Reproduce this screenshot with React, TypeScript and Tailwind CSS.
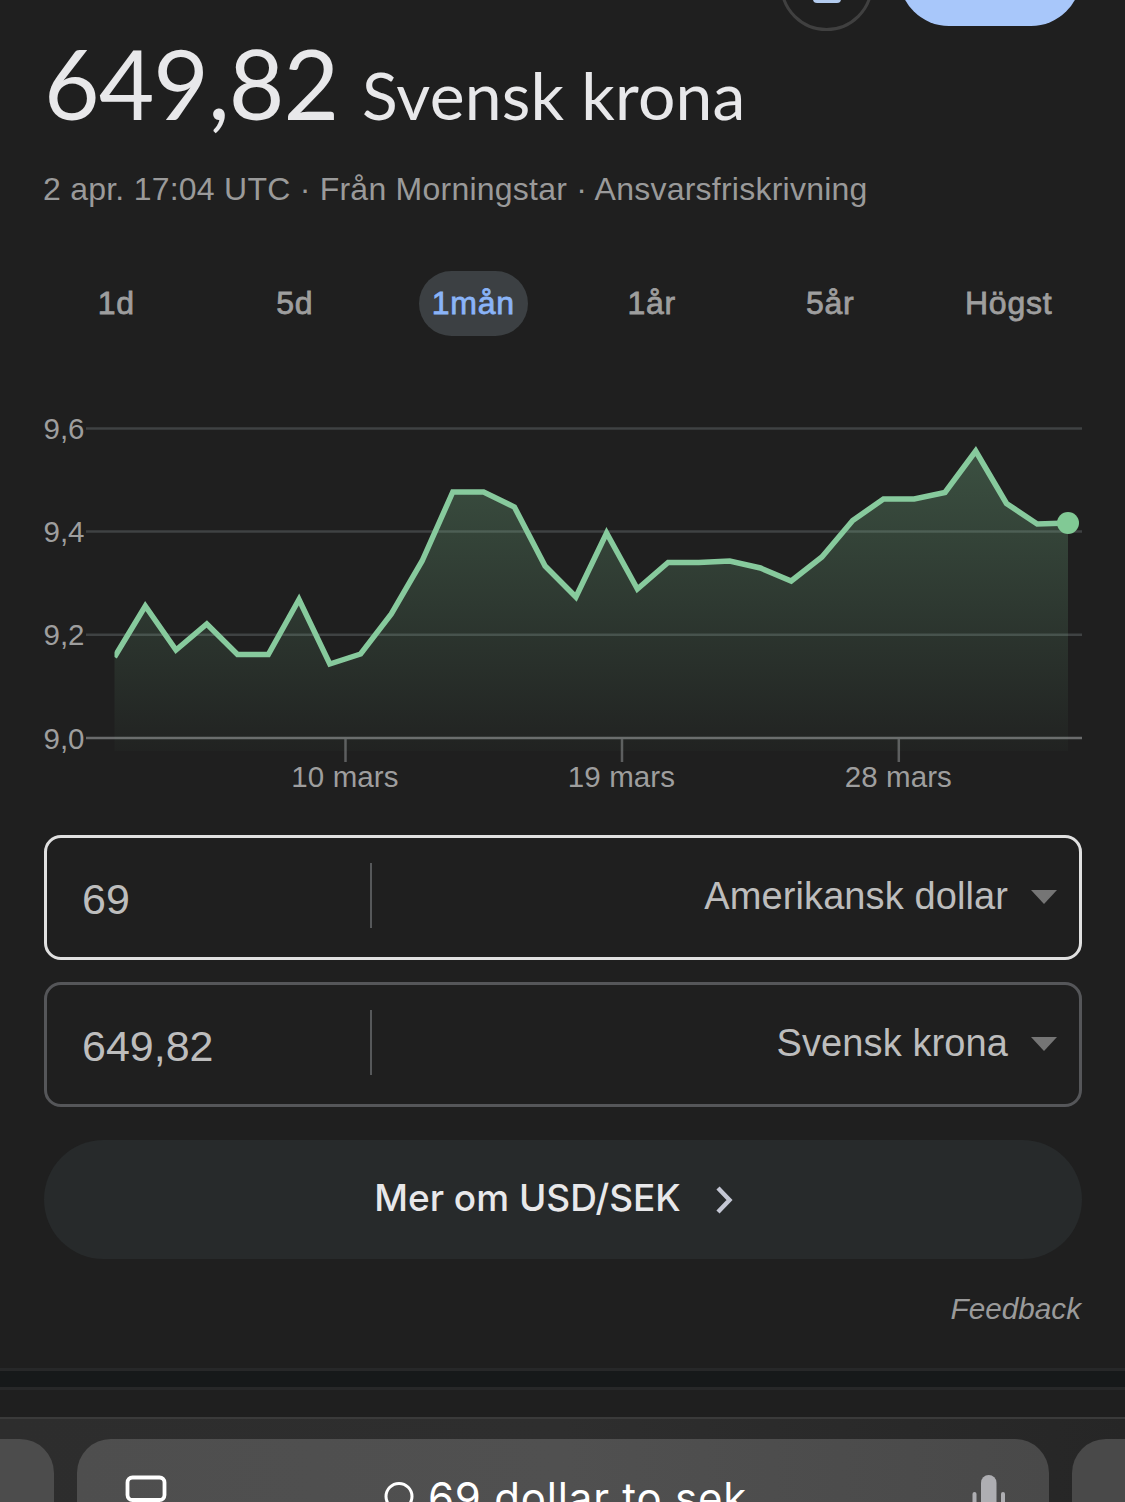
interface Period {
  id: string
  label: string
}

const periods: Period[] = [
  { id: '1d', label: '1d' },
  { id: '5d', label: '5d' },
  { id: '1m', label: '1mån' },
  { id: '1y', label: '1år' },
  { id: '5y', label: '5år' },
  { id: 'max', label: 'Högst' },
]

const activePeriod = '1m'

const yTicks = [
  { label: '9,6', y: 28.5 },
  { label: '9,4', y: 131.5 },
  { label: '9,2', y: 234.8 },
  { label: '9,0', y: 338 },
]

const xTicks = [
  { label: '10 mars', x: 345.5 },
  { label: '19 mars', x: 622 },
  { label: '28 mars', x: 898.8 },
]

// one y value per day, in chart pixels
const rates = [
  257, 206, 250, 224, 254.5, 254.5, 199.5, 264, 254, 214, 161, 92, 92, 107, 166, 197,
  133, 189, 162.5, 162.5, 161, 168, 181, 157, 120.5, 99, 99, 92.5, 51, 103.5, 124, 123,
]

const startX = 114.5
const endX = 1068
const step = (endX - startX) / (rates.length - 1)
const line = rates.map((y, i) => `${(startX + i * step).toFixed(1)},${y}`).join(' ')

function RateChart() {
  return (
    <svg width="1125" height="400" viewBox="0 0 1125 400" className="block shrink-0">
      <defs>
        <linearGradient id="area" gradientUnits="userSpaceOnUse" x1="0" y1="50" x2="0" y2="352">
          <stop offset="0" stopColor="#81c995" stopOpacity="0.29" />
          <stop offset="1" stopColor="#81c995" stopOpacity="0.02" />
        </linearGradient>
        <clipPath id="plot">
          <rect x="114.5" y="0" width="1011" height="400" />
        </clipPath>
      </defs>
      {yTicks.map((t, i) => (
        <g key={t.label}>
          <line x1="86" x2="1082" y1={t.y} y2={t.y} stroke={i === 3 ? '#6a6b6c' : '#3f4243'} strokeWidth="2.5" />
          <text x="43.5" y={t.y + 10.5} fontSize="29.5" fill="#9e9e9e">{t.label}</text>
        </g>
      ))}
      {xTicks.map(t => (
        <g key={t.label}>
          <line x1={t.x} x2={t.x} y1="339" y2="362" stroke="#5d5e5f" strokeWidth="2.5" />
          <text x={t.x - 0.5} y="387" fontSize="29.5" fill="#9e9e9e" textAnchor="middle" letterSpacing="0.1">{t.label}</text>
        </g>
      ))}
      <polygon points={`${startX},351 ${line} ${endX},351`} fill="url(#area)" />
      <polyline points={line} fill="none" stroke="#87ca9d" strokeWidth="5.5" clipPath="url(#plot)" />
      <circle cx="1068" cy="123" r="11" fill="#81c995" />
    </svg>
  )
}

function CurrencyField({ value, currency, focused }: { value: string; currency: string; focused?: boolean }) {
  return (
    <div
      className={`flex h-[125px] items-center rounded-[17px] border-[3px] pr-[21px] pl-[35px] ${
        focused ? 'border-[#e0e0e0]' : 'border-[#555659]'
      }`}
    >
      <span className="w-[288px] pt-[4px] text-[43px] leading-none text-[#bdbdbd]">{value}</span>
      <span className="mb-[4px] h-[65px] w-[2px] bg-[#56585a]" />
      <span className="mb-[3px] ml-auto text-[38px] leading-none tracking-[0.1px] text-[#bdbdbd]">{currency}</span>
      <svg width="28" height="16" viewBox="0 0 28 16" className="mb-[2px] ml-[22px]">
        <path d="M1 1h26L14 15z" fill="#757575" />
      </svg>
    </div>
  )
}

function BrowserBar() {
  return (
    <div className="flex h-[85px] gap-[23px] overflow-hidden border-t-2 border-[#3a3a3a] bg-gradient-to-r from-[#2d2d2d] via-[#2e2e2e] to-[#262626] pt-[20px]">
      <div className="h-[140px] w-[54px] shrink-0 rounded-tr-[34px] bg-[#4c4c4c]" />
      <div className="flex h-[140px] w-[972px] shrink-0 items-start rounded-[34px] bg-gradient-to-r from-[#4e4e4e] via-[#505050] to-[#494949]">
        <svg width="46" height="63" viewBox="0 0 46 63" className="ml-[46px] shrink-0" fill="none">
          <rect x="4.5" y="38.5" width="37" height="22.5" rx="5" stroke="#fff" strokeWidth="3.8" />
        </svg>
        <svg width="34" height="63" viewBox="0 0 34 63" className="ml-[215px] shrink-0" fill="none">
          <circle cx="15" cy="57.5" r="13" stroke="#fff" strokeWidth="3" />
        </svg>
        <span className="mt-[33px] ml-[10px] w-[330px] shrink-0 font-['Inter',sans-serif] text-[42px] leading-[52px] tracking-[0.8px] whitespace-nowrap text-white">
          69 dollar to sek
        </span>
        <svg width="36" height="63" viewBox="0 0 36 63" className="ml-[213px] shrink-0" fill="#aeaeb2">
          <rect x="10" y="36" width="15.5" height="40" rx="7.7" />
          <rect x="1.5" y="53" width="4" height="20" rx="2" />
          <rect x="30" y="53" width="4" height="20" rx="2" />
        </svg>
      </div>
      <div className="h-[140px] w-[54px] shrink-0 rounded-tl-[34px] bg-[#494949]" />
    </div>
  )
}

export default function App() {
  return (
    <div className="flex h-[1502px] w-[1125px] flex-col overflow-hidden bg-[#1f1f1f] font-['Liberation_Sans',sans-serif]">
      {/* Share and follow buttons, scrolled mostly out of view */}
      <div className="flex h-[39px] shrink-0 items-start justify-end gap-[26px] overflow-hidden pr-[44px]">
        <div className="-mt-[62px] flex h-[93px] w-[93px] items-end justify-center rounded-full border-[3px] border-[#404040] pb-[25px]">
          <div className="h-[30px] w-[28px] rounded-[4px] bg-[#b3cbee]" />
        </div>
        <div className="-mt-[74px] h-[100px] w-[182px] rounded-[50px] bg-[#a8c7fa]" />
      </div>

      <h1 className="flex h-[87px] shrink-0 items-baseline pl-[44px] font-['Lato',sans-serif] leading-[87px] whitespace-nowrap text-[#e8e8ea]">
        <span className="w-[318px] text-[96px] tracking-[-1px]">649,82</span>
        <span className="text-[66px] tracking-[0.2px]">Svensk krona</span>
      </h1>

      <p className="mt-[43px] shrink-0 pl-[43px] text-[32px] leading-[40px] tracking-[0.24px] whitespace-nowrap text-[#9a9a9a]">
        2 apr. 17:04 UTC · Från Morningstar · Ansvarsfriskrivning
      </p>

      <nav className="mt-[62px] grid shrink-0 grid-cols-6 px-[27px]">
        {periods.map(p => (
          <div key={p.id} className="flex justify-center">
            <button
              className={`h-[65px] rounded-full px-[13px] pb-[2px] text-[32px] tracking-[0.8px] [-webkit-text-stroke-width:0.8px] ${
                p.id === activePeriod ? 'bg-[#3c4043] text-[#8ab4f8]' : 'text-[#9e9e9e]'
              }`}
            >
              {p.label}
            </button>
          </div>
        ))}
      </nav>

      <div className="mt-[64px] h-[435px] shrink-0">
        <RateChart />
      </div>

      <div className="flex shrink-0 flex-col gap-[22px] pr-[43px] pl-[44px]">
        <CurrencyField value="69" currency="Amerikansk dollar" focused />
        <CurrencyField value="649,82" currency="Svensk krona" />
      </div>

      <button className="mr-[43px] ml-[44px] mt-[33px] flex h-[119px] shrink-0 items-center justify-center rounded-full bg-[#272a2b] pr-[17px] pb-[4px] font-['Inter',sans-serif] text-[37px] font-medium text-[#e8e8ea]">
        Mer om USD/SEK
        <svg width="20" height="30" viewBox="0 0 20 30" className="mt-[4px] ml-[34px]" fill="none">
          <path d="M3 3 14.5 15 3 27" stroke="#c4c7d4" strokeWidth="4.4" />
        </svg>
      </button>

      <p className="mt-[30px] shrink-0 pr-[44px] text-right text-[29.7px] leading-[40px] italic text-[#9a9a9a]">
        Feedback
      </p>

      <div className="mt-[39px] h-[22px] shrink-0 border-y-[3px] border-[#272829] bg-[#16191a]" />

      <div className="mt-[27px] shrink-0">
        <BrowserBar />
      </div>
    </div>
  )
}
